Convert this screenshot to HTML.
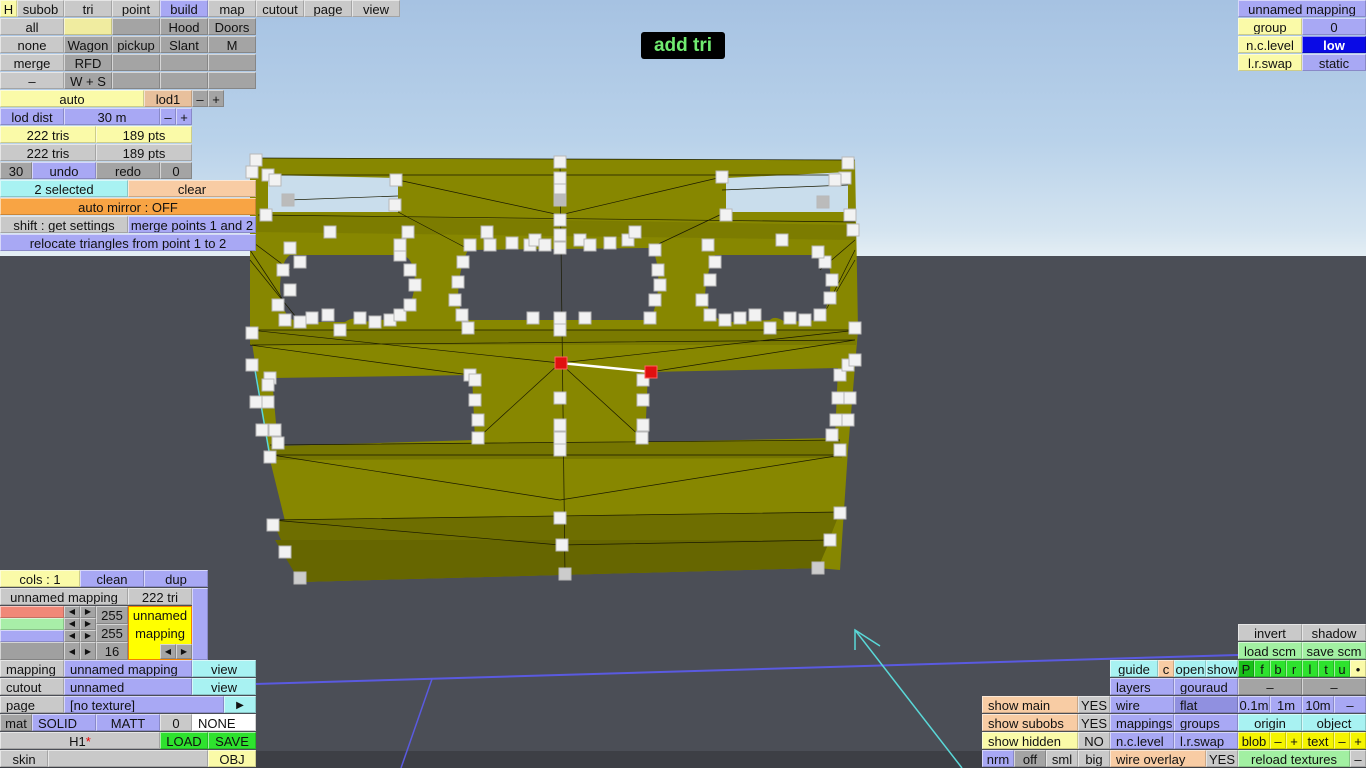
<!DOCTYPE html>
<html><head><meta charset="utf-8"><style>
body{margin:0;width:1366px;height:768px;overflow:hidden;position:relative;background:#4b4e56;font-family:"Liberation Sans","DejaVu Sans",sans-serif}
#sky{position:absolute;left:0;top:0;width:1366px;height:256px;background:linear-gradient(#a6c2e2 0%,#b9d2ea 55%,#d4e4f0 90%,#e4eef4 100%)}
#strip{position:absolute;left:0;top:751px;width:1366px;height:17px;background:#3d3f45}
.b{position:absolute;height:17px;line-height:17px;font-size:13px;text-align:center;color:#111;box-sizing:border-box;border-top:1px solid rgba(255,255,255,.55);border-left:1px solid rgba(255,255,255,.55);border-right:1px solid rgba(0,0,0,.18);border-bottom:1px solid rgba(0,0,0,.18);white-space:nowrap;overflow:hidden}
.g{background:#c9c9c9}.d{background:#a4a4a4}.u{background:#a8a8f4}.y{background:#fafaa8}.p{background:#f8cca4}.c{background:#a8f2f2}.o{background:#f8a444}.G{background:#2ee22e}.L{background:#a2f0a2}.w{background:#fff}
.l{text-align:left;padding-left:5px}
svg{position:absolute;left:0;top:0}
</style></head><body>
<div id="sky"></div><div id="strip"></div>
<svg width="1366" height="768">
<line x1="255" y1="684" x2="1238" y2="655" stroke="#5a5ae0" stroke-width="2"/>
<line x1="432" y1="679" x2="401" y2="768" stroke="#5a5ae0" stroke-width="1.5"/>
<g stroke="#5ad8d8" stroke-width="1.5" fill="none"><line x1="855" y1="630" x2="962" y2="768"/><polyline points="855,650 855,630 880,646"/></g>
<polygon points="250,158 855,160 858,330 848,450 840,570 818,568 300,582 270,460 250,330" fill="#878700"/>
<polygon points="258,215 855,225 856,240 256,232" fill="#7c7c00"/>
<polygon points="250,330 858,330 856,345 250,345" fill="#7a7a00"/>
<polygon points="270,445 840,440 842,458 272,460" fill="#757500"/>
<polygon points="272,520 840,512 818,568 300,582" fill="#6e6e00"/>
<polygon points="275,540 830,540 818,568 300,582" fill="#666600"/>
<g fill="#c9ddec"><polygon points="268,175 398,178 398,212 268,212"/><polygon points="726,178 848,172 848,212 726,212"/></g>
<g fill="#4b4e56">
<path d="M290,255 Q280,262 280,290 Q282,320 300,322 L345,322 Q355,315 362,322 L400,318 Q418,300 414,270 Q410,255 400,255 Z"/>
<path d="M468,250 Q458,270 458,300 Q462,320 470,320 L650,320 Q660,300 658,270 Q655,250 650,248 Z"/>
<path d="M715,255 Q705,275 705,300 Q712,322 730,322 L770,320 Q775,315 785,322 L820,320 Q833,300 830,270 Q825,255 815,255 Z"/>
<path d="M272,378 L472,375 L475,440 L278,446 Z"/>
<path d="M648,372 L838,368 L835,438 L645,442 Z"/>
</g>
<g stroke="#1a1a00" stroke-width="0.7" fill="none">
<path d="M250,158 L855,160 M258,215 L855,222 M250,330 L858,330 M252,345 L855,340 M270,445 L840,440 M272,455 L842,455 M272,520 L840,512 M560,162 L565,574 M250,330 L560,363 L858,330 M272,455 L560,500 L842,455 M272,520 L560,545 L830,540 M398,180 L560,215 L722,177 M250,345 L470,375 M855,340 L650,372 M560,363 L478,438 M560,363 L642,438"/>
<path d="M250,240 L290,270 M250,250 L283,300 M250,260 L300,322 M855,240 L820,270 M855,250 L830,300 M855,260 L820,320 M398,212 L470,250 M726,212 L650,248 M278,175 L848,175 M288,200 L398,196 M722,190 L848,185"/>
</g>
<line x1="255" y1="370" x2="270" y2="457" stroke="#5ad8d8" stroke-width="1.5"/>
<line x1="561" y1="363" x2="651" y2="372" stroke="#fff" stroke-width="2.5"/>
<g fill="#f2f2f2" stroke="#b8b8b8" stroke-width="1">
<rect x="250" y="154" width="12" height="12"/><rect x="246" y="166" width="12" height="12"/><rect x="262" y="169" width="12" height="12"/><rect x="269" y="174" width="12" height="12"/><rect x="390" y="174" width="12" height="12"/><rect x="282" y="194" width="12" height="12" fill="#bbb"/><rect x="260" y="209" width="12" height="12"/><rect x="389" y="199" width="12" height="12"/>
<rect x="554" y="156" width="12" height="12"/><rect x="554" y="172" width="12" height="12"/><rect x="554" y="184" width="12" height="12"/><rect x="554" y="194" width="12" height="12" fill="#bbb"/><rect x="554" y="214" width="12" height="12"/><rect x="554" y="229" width="12" height="12"/><rect x="554" y="242" width="12" height="12"/>
<rect x="716" y="171" width="12" height="12"/><rect x="817" y="196" width="12" height="12" fill="#bbb"/><rect x="720" y="209" width="12" height="12"/><rect x="842" y="157" width="12" height="12"/><rect x="839" y="172" width="12" height="12"/><rect x="829" y="174" width="12" height="12"/><rect x="844" y="209" width="12" height="12"/><rect x="847" y="224" width="12" height="12"/>
<rect x="324" y="226" width="12" height="12"/><rect x="402" y="226" width="12" height="12"/><rect x="284" y="242" width="12" height="12"/><rect x="294" y="256" width="12" height="12"/><rect x="277" y="264" width="12" height="12"/><rect x="284" y="284" width="12" height="12"/><rect x="272" y="299" width="12" height="12"/><rect x="279" y="314" width="12" height="12"/><rect x="294" y="316" width="12" height="12"/><rect x="306" y="312" width="12" height="12"/><rect x="322" y="309" width="12" height="12"/><rect x="334" y="324" width="12" height="12"/><rect x="354" y="312" width="12" height="12"/><rect x="369" y="316" width="12" height="12"/><rect x="384" y="314" width="12" height="12"/><rect x="394" y="309" width="12" height="12"/><rect x="404" y="299" width="12" height="12"/><rect x="409" y="279" width="12" height="12"/><rect x="404" y="264" width="12" height="12"/><rect x="394" y="249" width="12" height="12"/><rect x="394" y="239" width="12" height="12"/>
<rect x="481" y="226" width="12" height="12"/><rect x="464" y="239" width="12" height="12"/><rect x="457" y="256" width="12" height="12"/><rect x="452" y="276" width="12" height="12"/><rect x="449" y="294" width="12" height="12"/><rect x="456" y="309" width="12" height="12"/><rect x="462" y="322" width="12" height="12"/><rect x="484" y="239" width="12" height="12"/><rect x="506" y="237" width="12" height="12"/><rect x="524" y="239" width="12" height="12"/><rect x="529" y="234" width="12" height="12"/><rect x="539" y="239" width="12" height="12"/><rect x="574" y="234" width="12" height="12"/><rect x="584" y="239" width="12" height="12"/><rect x="604" y="237" width="12" height="12"/><rect x="622" y="234" width="12" height="12"/><rect x="629" y="226" width="12" height="12"/><rect x="649" y="244" width="12" height="12"/><rect x="652" y="264" width="12" height="12"/><rect x="654" y="279" width="12" height="12"/><rect x="649" y="294" width="12" height="12"/><rect x="644" y="312" width="12" height="12"/><rect x="527" y="312" width="12" height="12"/><rect x="579" y="312" width="12" height="12"/><rect x="554" y="312" width="12" height="12"/><rect x="554" y="324" width="12" height="12"/>
<rect x="702" y="239" width="12" height="12"/><rect x="776" y="234" width="12" height="12"/><rect x="709" y="256" width="12" height="12"/><rect x="704" y="274" width="12" height="12"/><rect x="696" y="294" width="12" height="12"/><rect x="704" y="309" width="12" height="12"/><rect x="719" y="314" width="12" height="12"/><rect x="734" y="312" width="12" height="12"/><rect x="749" y="309" width="12" height="12"/><rect x="764" y="322" width="12" height="12"/><rect x="784" y="312" width="12" height="12"/><rect x="799" y="314" width="12" height="12"/><rect x="814" y="309" width="12" height="12"/><rect x="824" y="292" width="12" height="12"/><rect x="826" y="274" width="12" height="12"/><rect x="819" y="256" width="12" height="12"/><rect x="812" y="246" width="12" height="12"/><rect x="849" y="322" width="12" height="12"/>
<rect x="246" y="327" width="12" height="12"/><rect x="246" y="359" width="12" height="12"/><rect x="264" y="372" width="12" height="12"/><rect x="262" y="379" width="12" height="12"/><rect x="250" y="396" width="12" height="12"/><rect x="262" y="396" width="12" height="12"/><rect x="256" y="424" width="12" height="12"/><rect x="269" y="424" width="12" height="12"/><rect x="272" y="437" width="12" height="12"/><rect x="264" y="451" width="12" height="12"/><rect x="464" y="369" width="12" height="12"/><rect x="469" y="374" width="12" height="12"/><rect x="469" y="394" width="12" height="12"/><rect x="472" y="414" width="12" height="12"/><rect x="472" y="432" width="12" height="12"/>
<rect x="554" y="392" width="12" height="12"/><rect x="554" y="419" width="12" height="12"/><rect x="554" y="432" width="12" height="12"/><rect x="554" y="444" width="12" height="12"/><rect x="554" y="512" width="12" height="12"/><rect x="556" y="539" width="12" height="12"/><rect x="559" y="568" width="12" height="12" fill="#ccc"/>
<rect x="637" y="374" width="12" height="12"/><rect x="637" y="394" width="12" height="12"/><rect x="637" y="419" width="12" height="12"/><rect x="636" y="432" width="12" height="12"/><rect x="834" y="369" width="12" height="12"/><rect x="842" y="359" width="12" height="12"/><rect x="849" y="354" width="12" height="12"/><rect x="832" y="392" width="12" height="12"/><rect x="844" y="392" width="12" height="12"/><rect x="830" y="414" width="12" height="12"/><rect x="842" y="414" width="12" height="12"/><rect x="826" y="429" width="12" height="12"/><rect x="834" y="444" width="12" height="12"/><rect x="834" y="507" width="12" height="12"/><rect x="824" y="534" width="12" height="12"/><rect x="812" y="562" width="12" height="12" fill="#ccc"/>
<rect x="267" y="519" width="12" height="12"/><rect x="279" y="546" width="12" height="12"/><rect x="294" y="572" width="12" height="12" fill="#ccc"/>
</g>
<rect x="555" y="357" width="12" height="12" fill="#e01010" stroke="#ff6060"/><rect x="645" y="366" width="12" height="12" fill="#e01010" stroke="#ff6060"/>
</svg>
<div style="position:absolute;left:641px;top:32px;width:84px;height:27px;background:#000;border-radius:3px;color:#70ec70;font-weight:bold;font-size:19px;line-height:27px;text-align:center">add tri</div>

<!-- top menu -->
<div class="b y" style="left:0;top:0;width:17px">H</div>
<div class="b g" style="left:17px;top:0;width:47px">subob</div>
<div class="b g" style="left:64px;top:0;width:48px">tri</div>
<div class="b g" style="left:112px;top:0;width:48px">point</div>
<div class="b u" style="left:160px;top:0;width:48px">build</div>
<div class="b g" style="left:208px;top:0;width:48px">map</div>
<div class="b g" style="left:256px;top:0;width:48px">cutout</div>
<div class="b g" style="left:304px;top:0;width:48px">page</div>
<div class="b g" style="left:352px;top:0;width:48px">view</div>
<div class="b g" style="left:0;top:18px;width:64px">all</div>
<div class="b y" style="left:64px;top:18px;width:48px;background:#f0eca0"></div>
<div class="b d" style="left:112px;top:18px;width:48px"></div>
<div class="b d" style="left:160px;top:18px;width:48px">Hood</div>
<div class="b d" style="left:208px;top:18px;width:48px">Doors</div>
<div class="b g" style="left:0;top:36px;width:64px">none</div>
<div class="b d" style="left:64px;top:36px;width:48px">Wagon</div>
<div class="b d" style="left:112px;top:36px;width:48px">pickup</div>
<div class="b d" style="left:160px;top:36px;width:48px">Slant</div>
<div class="b d" style="left:208px;top:36px;width:48px">M</div>
<div class="b g" style="left:0;top:54px;width:64px">merge</div>
<div class="b d" style="left:64px;top:54px;width:48px">RFD</div>
<div class="b d" style="left:112px;top:54px;width:48px"></div>
<div class="b d" style="left:160px;top:54px;width:48px"></div>
<div class="b d" style="left:208px;top:54px;width:48px"></div>
<div class="b g" style="left:0;top:72px;width:64px">–</div>
<div class="b d" style="left:64px;top:72px;width:48px">W + S</div>
<div class="b d" style="left:112px;top:72px;width:48px"></div>
<div class="b d" style="left:160px;top:72px;width:48px"></div>
<div class="b d" style="left:208px;top:72px;width:48px"></div>
<div class="b y" style="left:0;top:90px;width:144px">auto</div>
<div class="b p" style="left:144px;top:90px;width:48px;background:#e8c09c">lod1</div>
<div class="b d" style="left:192px;top:90px;width:16px">–</div>
<div class="b d" style="left:208px;top:90px;width:16px">+</div>
<div class="b u" style="left:0;top:108px;width:64px">lod dist</div>
<div class="b u" style="left:64px;top:108px;width:96px">30 m</div>
<div class="b u" style="left:160px;top:108px;width:16px">–</div>
<div class="b u" style="left:176px;top:108px;width:16px">+</div>
<div class="b y" style="left:0;top:126px;width:96px">222 tris</div>
<div class="b y" style="left:96px;top:126px;width:96px">189 pts</div>
<div class="b g" style="left:0;top:144px;width:96px">222 tris</div>
<div class="b g" style="left:96px;top:144px;width:96px">189 pts</div>
<div class="b d" style="left:0;top:162px;width:32px">30</div>
<div class="b u" style="left:32px;top:162px;width:64px">undo</div>
<div class="b d" style="left:96px;top:162px;width:64px">redo</div>
<div class="b d" style="left:160px;top:162px;width:32px">0</div>
<div class="b c" style="left:0;top:180px;width:128px">2 selected</div>
<div class="b p" style="left:128px;top:180px;width:128px">clear</div>
<div class="b o" style="left:0;top:198px;width:256px">auto mirror : OFF</div>
<div class="b g" style="left:0;top:216px;width:128px">shift : get settings</div>
<div class="b u" style="left:128px;top:216px;width:128px">merge points 1 and 2</div>
<div class="b u" style="left:0;top:234px;width:256px">relocate triangles from point 1 to 2</div>

<!-- top right -->
<div class="b u" style="left:1238px;top:0;width:128px">unnamed mapping</div>
<div class="b y" style="left:1238px;top:18px;width:64px">group</div>
<div class="b u" style="left:1302px;top:18px;width:64px">0</div>
<div class="b y" style="left:1238px;top:36px;width:64px">n.c.level</div>
<div class="b" style="left:1302px;top:36px;width:64px;background:#0a0ae6;color:#fff;font-weight:bold">low</div>
<div class="b y" style="left:1238px;top:54px;width:64px">l.r.swap</div>
<div class="b u" style="left:1302px;top:54px;width:64px">static</div>

<!-- bottom left -->
<div class="b y" style="left:0;top:570px;width:80px">cols : 1</div>
<div class="b u" style="left:80px;top:570px;width:64px">clean</div>
<div class="b u" style="left:144px;top:570px;width:64px">dup</div>
<div class="b g" style="left:0;top:588px;width:128px">unnamed mapping</div>
<div class="b g" style="left:128px;top:588px;width:64px">222 tri</div>
<div class="b u" style="left:192px;top:588px;width:16px;height:72px"></div>
<div class="b" style="left:0;top:606px;width:64px;height:12px;background:#f08878"></div>
<div class="b" style="left:0;top:618px;width:64px;height:12px;background:#a8eea8"></div>
<div class="b" style="left:0;top:630px;width:64px;height:12px;background:#a8a8f4"></div>
<div class="b" style="left:0;top:642px;width:64px;height:18px;background:#a0a0a0"></div>
<div class="b d" style="left:64px;top:606px;width:16px;height:12px;font-size:8px;line-height:10px">◀</div><div class="b d" style="left:80px;top:606px;width:16px;height:12px;font-size:8px;line-height:10px">▶</div>
<div class="b d" style="left:64px;top:618px;width:16px;height:12px;font-size:8px;line-height:10px">◀</div><div class="b d" style="left:80px;top:618px;width:16px;height:12px;font-size:8px;line-height:10px">▶</div>
<div class="b d" style="left:64px;top:630px;width:16px;height:12px;font-size:8px;line-height:10px">◀</div><div class="b d" style="left:80px;top:630px;width:16px;height:12px;font-size:8px;line-height:10px">▶</div>
<div class="b d" style="left:64px;top:642px;width:16px;height:18px;font-size:8px">◀</div><div class="b d" style="left:80px;top:642px;width:16px;height:18px;font-size:8px">▶</div>
<div class="b d" style="left:96px;top:606px;width:32px;height:18px;line-height:17px">255</div>
<div class="b d" style="left:96px;top:624px;width:32px;height:18px;line-height:17px">255</div>
<div class="b d" style="left:96px;top:642px;width:32px;height:18px;line-height:17px">16</div>
<div style="position:absolute;left:128px;top:606px;width:64px;height:54px;box-sizing:border-box;background:#ffff00;border:1px solid #f08000;font-size:13px;text-align:center;line-height:18px;color:#111">unnamed<br>mapping</div>
<div class="b d" style="left:160px;top:644px;width:16px;height:15px;font-size:8px;line-height:13px">◀</div><div class="b d" style="left:176px;top:644px;width:16px;height:15px;font-size:8px;line-height:13px">▶</div>
<div class="b g l" style="left:0;top:660px;width:64px">mapping</div>
<div class="b u l" style="left:64px;top:660px;width:128px">unnamed mapping</div>
<div class="b c" style="left:192px;top:660px;width:64px">view</div>
<div class="b g l" style="left:0;top:678px;width:64px">cutout</div>
<div class="b u l" style="left:64px;top:678px;width:128px">unnamed</div>
<div class="b c" style="left:192px;top:678px;width:64px">view</div>
<div class="b g l" style="left:0;top:696px;width:64px">page</div>
<div class="b u l" style="left:64px;top:696px;width:160px">[no texture]</div>
<div class="b c" style="left:224px;top:696px;width:32px;font-size:10px">▶</div>
<div class="b d" style="left:0;top:714px;width:32px">mat</div>
<div class="b u l" style="left:32px;top:714px;width:64px">SOLID</div>
<div class="b u" style="left:96px;top:714px;width:64px">MATT</div>
<div class="b g" style="left:160px;top:714px;width:32px">0</div>
<div class="b w l" style="left:192px;top:714px;width:64px">NONE</div>
<div class="b g" style="left:0;top:732px;width:160px">H1<span style="color:#e00">*</span></div>
<div class="b G" style="left:160px;top:732px;width:48px">LOAD</div>
<div class="b G" style="left:208px;top:732px;width:48px">SAVE</div>
<div class="b g" style="left:0;top:750px;width:48px">skin</div>
<div class="b g" style="left:48px;top:750px;width:160px"></div>
<div class="b y" style="left:208px;top:750px;width:48px">OBJ</div>

<!-- bottom right -->
<div class="b g" style="left:1238px;top:624px;width:64px">invert</div>
<div class="b g" style="left:1302px;top:624px;width:64px">shadow</div>
<div class="b L" style="left:1238px;top:642px;width:64px">load scm</div>
<div class="b L" style="left:1302px;top:642px;width:64px">save scm</div>
<div class="b c" style="left:1110px;top:660px;width:48px">guide</div>
<div class="b p" style="left:1158px;top:660px;width:16px">c</div>
<div class="b c" style="left:1174px;top:660px;width:32px">open</div>
<div class="b c" style="left:1206px;top:660px;width:32px">show</div>
<div class="b G" style="left:1238px;top:660px;width:16px;background:#18c018">P</div>
<div class="b G" style="left:1254px;top:660px;width:16px">f</div>
<div class="b G" style="left:1270px;top:660px;width:16px">b</div>
<div class="b G" style="left:1286px;top:660px;width:16px">r</div>
<div class="b G" style="left:1302px;top:660px;width:16px">l</div>
<div class="b G" style="left:1318px;top:660px;width:16px">t</div>
<div class="b G" style="left:1334px;top:660px;width:16px">u</div>
<div class="b y" style="left:1350px;top:660px;width:16px">•</div>
<div class="b u l" style="left:1110px;top:678px;width:64px">layers</div>
<div class="b u l" style="left:1174px;top:678px;width:64px">gouraud</div>
<div class="b d" style="left:1238px;top:678px;width:64px">–</div>
<div class="b d" style="left:1302px;top:678px;width:64px">–</div>
<div class="b p l" style="left:982px;top:696px;width:96px">show main</div>
<div class="b g" style="left:1078px;top:696px;width:32px">YES</div>
<div class="b u l" style="left:1110px;top:696px;width:64px">wire</div>
<div class="b u l" style="left:1174px;top:696px;width:64px;background:#9090e0">flat</div>
<div class="b u" style="left:1238px;top:696px;width:32px">0.1m</div>
<div class="b u" style="left:1270px;top:696px;width:32px">1m</div>
<div class="b u" style="left:1302px;top:696px;width:32px">10m</div>
<div class="b u" style="left:1334px;top:696px;width:32px">–</div>
<div class="b p l" style="left:982px;top:714px;width:96px">show subobs</div>
<div class="b g" style="left:1078px;top:714px;width:32px">YES</div>
<div class="b u l" style="left:1110px;top:714px;width:64px">mappings</div>
<div class="b u l" style="left:1174px;top:714px;width:64px">groups</div>
<div class="b c" style="left:1238px;top:714px;width:64px">origin</div>
<div class="b c" style="left:1302px;top:714px;width:64px">object</div>
<div class="b y l" style="left:982px;top:732px;width:96px">show hidden</div>
<div class="b g" style="left:1078px;top:732px;width:32px">NO</div>
<div class="b u l" style="left:1110px;top:732px;width:64px">n.c.level</div>
<div class="b u l" style="left:1174px;top:732px;width:64px">l.r.swap</div>
<div class="b y" style="left:1238px;top:732px;width:32px;background:#f4f400">blob</div>
<div class="b y" style="left:1270px;top:732px;width:16px;background:#f4f400">–</div>
<div class="b y" style="left:1286px;top:732px;width:16px;background:#f4f400">+</div>
<div class="b y" style="left:1302px;top:732px;width:32px;background:#f4f400">text</div>
<div class="b y" style="left:1334px;top:732px;width:16px;background:#f4f400">–</div>
<div class="b y" style="left:1350px;top:732px;width:16px;background:#f4f400">+</div>
<div class="b u" style="left:982px;top:750px;width:32px">nrm</div>
<div class="b d" style="left:1014px;top:750px;width:32px">off</div>
<div class="b g" style="left:1046px;top:750px;width:32px">sml</div>
<div class="b g" style="left:1078px;top:750px;width:32px">big</div>
<div class="b p l" style="left:1110px;top:750px;width:96px">wire overlay</div>
<div class="b g" style="left:1206px;top:750px;width:32px">YES</div>
<div class="b L" style="left:1238px;top:750px;width:112px">reload textures</div>
<div class="b g" style="left:1350px;top:750px;width:16px">–</div>
</body></html>
